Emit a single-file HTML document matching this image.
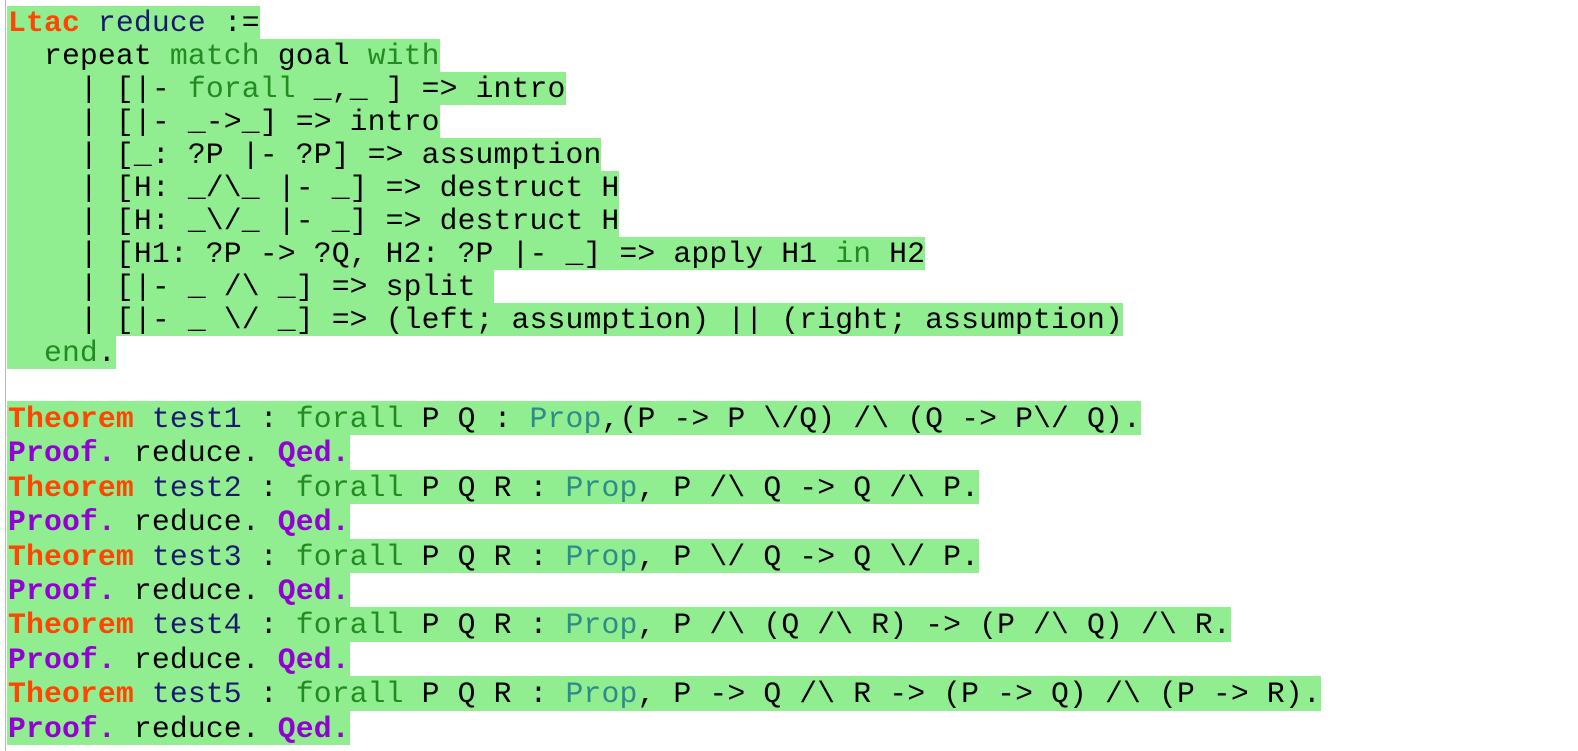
<!DOCTYPE html>
<html><head><meta charset="utf-8"><style>
html,body{margin:0;padding:0;background:#fff;width:1578px;height:751px;overflow:hidden}
body{position:relative;font-family:"Liberation Mono","Courier New",monospace;font-size:29.75px;color:#000;letter-spacing:0.13px}
.bar{position:absolute;left:5px;top:0;width:1px;height:751px;background:#bbb}
.blk{position:absolute;left:7px}
.l{display:flex;white-space:pre;height:33px}
.l span.h{display:block;background:#90ee90;height:33px;line-height:34px;padding-left:1px}
.b2 .l, .b2 .l span.h{height:34.4px;line-height:36px}
.k{color:#ff4500;font-weight:bold}
.n{color:#191970}
.g{color:#228b22}
.t{color:#2e8b8b}
.p{color:#9400d3;font-weight:bold}
</style></head><body>
<div class="bar"></div>
<div class="blk" style="top:6px">
<div class="l"><span class="h"><span class="k">Ltac</span> <span class="n">reduce</span> :=</span></div>
<div class="l"><span class="h">  repeat <span class="g">match</span> goal <span class="g">with</span></span></div>
<div class="l"><span class="h">    | [|- <span class="g">forall</span> _,_ ] =&gt; intro</span></div>
<div class="l"><span class="h">    | [|- _-&gt;_] =&gt; intro</span></div>
<div class="l"><span class="h">    | [_: ?P |- ?P] =&gt; assumption</span></div>
<div class="l"><span class="h">    | [H: _/\_ |- _] =&gt; destruct H</span></div>
<div class="l"><span class="h">    | [H: _\/_ |- _] =&gt; destruct H</span></div>
<div class="l"><span class="h">    | [H1: ?P -&gt; ?Q, H2: ?P |- _] =&gt; apply H1 <span class="g">in</span> H2</span></div>
<div class="l"><span class="h">    | [|- _ /\ _] =&gt; split </span></div>
<div class="l"><span class="h">    | [|- _ \/ _] =&gt; (left; assumption) || (right; assumption)</span></div>
<div class="l"><span class="h">  <span class="g">end</span>.</span></div>
</div>
<div class="blk b2" style="top:401px">
<div class="l"><span class="h"><span class="k">Theorem</span> <span class="n">test1</span> : <span class="g">forall</span> P Q : <span class="t">Prop</span>,(P -&gt; P \/Q) /\ (Q -&gt; P\/ Q).</span></div>
<div class="l"><span class="h"><span class="p">Proof.</span> reduce. <span class="p">Qed.</span></span></div>
<div class="l"><span class="h"><span class="k">Theorem</span> <span class="n">test2</span> : <span class="g">forall</span> P Q R : <span class="t">Prop</span>, P /\ Q -&gt; Q /\ P.</span></div>
<div class="l"><span class="h"><span class="p">Proof.</span> reduce. <span class="p">Qed.</span></span></div>
<div class="l"><span class="h"><span class="k">Theorem</span> <span class="n">test3</span> : <span class="g">forall</span> P Q R : <span class="t">Prop</span>, P \/ Q -&gt; Q \/ P.</span></div>
<div class="l"><span class="h"><span class="p">Proof.</span> reduce. <span class="p">Qed.</span></span></div>
<div class="l"><span class="h"><span class="k">Theorem</span> <span class="n">test4</span> : <span class="g">forall</span> P Q R : <span class="t">Prop</span>, P /\ (Q /\ R) -&gt; (P /\ Q) /\ R.</span></div>
<div class="l"><span class="h"><span class="p">Proof.</span> reduce. <span class="p">Qed.</span></span></div>
<div class="l"><span class="h"><span class="k">Theorem</span> <span class="n">test5</span> : <span class="g">forall</span> P Q R : <span class="t">Prop</span>, P -&gt; Q /\ R -&gt; (P -&gt; Q) /\ (P -&gt; R).</span></div>
<div class="l"><span class="h"><span class="p">Proof.</span> reduce. <span class="p">Qed.</span></span></div>
</div>
</body></html>
